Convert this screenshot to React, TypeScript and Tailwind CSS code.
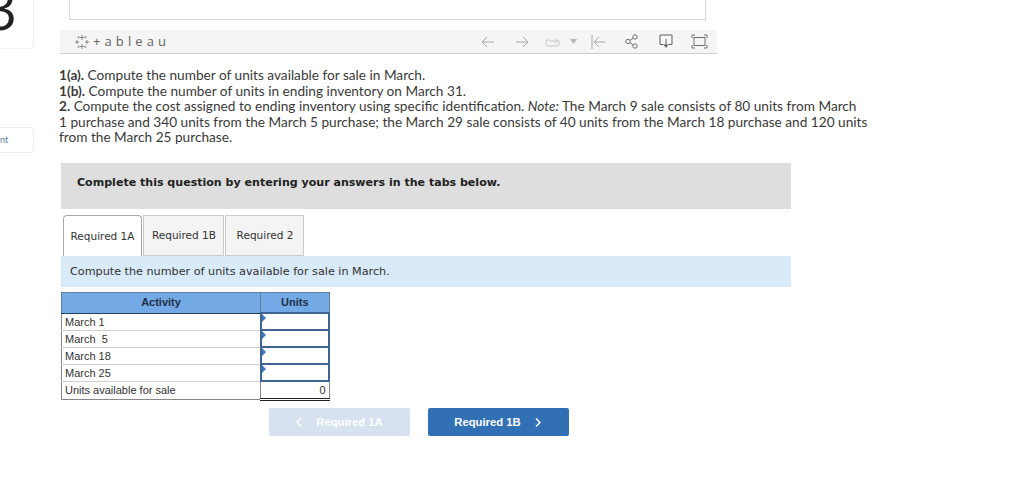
import React from "react";

const rows = ["March 1", "March  5", "March 18", "March 25"];

function TableauMark() {
  return (
    <svg width="16" height="16" viewBox="0 0 16 16" fill="none" stroke="#8a8a8a" strokeWidth="1">
      <path d="M8 1v5M5.500 3.500h5M8 10v5M5.500 12.500h5M3 6v4M1 8h4M13 6v4M11 8h4" />
      <path d="M4.500 2v2.500M3.300 3.200h2.400M11.500 2v2.500M10.300 3.200h2.400M4.500 11.500V14M3.300 12.800h2.400M11.500 11.500V14M10.300 12.800h2.400" strokeWidth="0.8" strokeDasharray="1 0.6" />
    </svg>
  );
}

function ToolbarIcons() {
  const c = "#a9a9a9";
  return (
    <div className="flex items-center">
      <svg width="14" height="12" viewBox="0 0 14 12" fill="none" stroke={c}><path d="M13 6H1M6 1 1 6l5 5" /></svg>
      <svg width="14" height="12" viewBox="0 0 14 12" fill="none" stroke={c} className="ml-[20px]"><path d="M1 6h12M8 1l5 5-5 5" /></svg>
      <svg width="16" height="12" viewBox="0 0 16 12" fill="none" stroke="#c4c4c4" className="ml-[16px]"><path d="M5 4H3a2 2 0 0 0-2 2v2a2 2 0 0 0 2 2h9a2 2 0 0 0 2-2V6a2 2 0 0 0-1-1.700M5 5h7.500M10 2.500 12.500 5 10 7.500" /></svg>
      <svg width="7" height="5" viewBox="0 0 7 5" fill="#b5b5b5" className="ml-[9px]"><path d="M0 0h7L3.500 5z" /></svg>
      <svg width="14" height="14" viewBox="0 0 14 14" fill="none" stroke={c} className="ml-[14px]"><path d="M1 0v14M14 7H3M8 2 3 7l5 5" /></svg>
      <svg width="14" height="15" viewBox="0 0 14 15" fill="none" stroke="#707070" className="ml-[20px]"><circle cx="3" cy="7.500" r="2.200" /><circle cx="10" cy="3" r="2.200" /><circle cx="10" cy="12" r="2.200" /><path d="M5 6.300 8.200 4.200M5 8.700l3.200 2.100" /></svg>
      <svg width="14" height="15" viewBox="0 0 14 15" fill="none" stroke="#606060" className="ml-[20px]"><path d="M4.500 10.500H1V1h12v9.500H9.500" /><path d="M7 5v8" /><path d="M4.500 10.500h5L7 14z" fill="#606060" stroke="none" /></svg>
      <svg width="17" height="15" viewBox="0 0 17 15" fill="none" stroke="#707070" className="ml-[18px]"><rect x="3" y="3.500" width="11" height="8" /><path d="M1 4V1h3M13 1h3v3M1 11v3h3M13 14h3v-3" /></svg>
    </div>
  );
}

export default function App() {
  return (
    <div className="flex h-[477px] w-[1024px] overflow-hidden bg-white font-['Lato','Open_Sans',sans-serif] text-[#333]">
      <aside className="flex w-[34px] shrink-0 flex-col">
        <div className="h-[49px] overflow-hidden rounded-br border-b border-r border-[#f0f0f0]">
          <div className="mt-[-26px] ml-[-15px] font-['Open_Sans',sans-serif] text-[56px] leading-[68px] text-[#222]">3</div>
        </div>
        <div className="mt-[78px] flex h-[26px] items-center rounded-r border border-l-0 border-[#eeeeee] text-[9px] text-[#5b7f9c]">nt</div>
      </aside>

      <main className="ml-[25px] w-[760px] shrink-0">
        <div className="ml-[10px] h-[20px] w-[637px] border-x border-b border-[#d9d9d9]" />

        <div className="mt-[10px] ml-[1px] flex h-[24px] w-[657px] items-center justify-between border-b border-[#cfcfcf] bg-[#f5f5f5] pl-[14px] pr-[9px]">
          <div className="flex items-center gap-[3px]">
            <TableauMark />
            <span className="font-['Open_Sans',sans-serif] text-[13px] tracking-[4.100px] text-[#666]">+ableau</span>
          </div>
          <ToolbarIcons />
        </div>

        <div className="mt-[14px] w-[815px] text-[13.650px] leading-[15.500px] text-[#3a3a3a]">
          <p><b>1(a).</b> Compute the number of units available for sale in March.</p>
          <p><b>1(b).</b> Compute the number of units in ending inventory on March 31.</p>
          <p><b>2.</b> Compute the cost assigned to ending inventory using specific identification. <i>Note:</i> The March 9 sale consists of 80 units from March<br />1 purchase and 340 units from the March 5 purchase; the March 29 sale consists of 40 units from the March 18 purchase and 120 units<br />from the March 25 purchase.</p>
        </div>

        <div className="mt-[17px] ml-[2px] flex h-[46px] w-[730px] items-start bg-[#dedede] pl-[16px] pt-[13px] font-['DejaVu_Sans',sans-serif] text-[11.050px] leading-[14px] font-bold text-[#222]">
          Complete this question by entering your answers in the tabs below.
        </div>

        <div className="mt-[6px] ml-[4px] flex h-[41px] items-end gap-[1px] font-['DejaVu_Sans',sans-serif] text-[10.500px] text-[#333]">
          <div className="z-10 flex h-[41px] w-[79px] items-center justify-center rounded-t-sm border border-b-0 border-[#a8a8a8] bg-white pt-[2px]">Required 1A</div>
          <div className="flex h-[41px] w-[81px] items-center justify-center border border-[#cccccc] bg-[#f4f4f4] pt-[2px] pl-[1px]">Required 1B</div>
          <div className="flex h-[41px] w-[79px] items-center justify-center border border-[#cccccc] bg-[#f4f4f4] pt-[2px] pl-[1px]">Required 2</div>
        </div>

        <div className="ml-[2px] flex h-[31px] w-[730px] items-center bg-[#d9eaf8] pl-[9px] pt-[2px] font-['DejaVu_Sans',sans-serif] text-[11.200px] text-[#333]">
          Compute the number of units available for sale in March.
        </div>

        <table className="mt-[5px] ml-[2px] w-[269px] table-fixed border-collapse font-['Liberation_Sans',sans-serif] text-[11px] leading-[14px] text-[#333]">
          <thead>
            <tr className="h-[21px] bg-[#73a9e4] font-bold text-[#1e2f46]">
              <th className="w-[199px] border border-[#5f7f9f] border-b-[#24405f] p-0 pb-[2px] font-bold">Activity</th>
              <th className="border border-[#5f7f9f] border-b-[#24405f] p-0 font-bold">Units</th>
            </tr>
          </thead>
          <tbody>
            {rows.map((r) => (
              <tr key={r} className="h-[17px]">
                <td className="whitespace-pre border-x border-b border-[#888] border-b-[#cfcfcf] py-0 pl-[3px] last:border-b-[#888]">{r}</td>
                <td className="relative border-2 border-[#3f6594] p-0">
                  <span className="absolute left-0 top-0 h-0 w-0 border-y-[4px] border-l-[4px] border-y-transparent border-l-[#3f78c0]" />
                </td>
              </tr>
            ))}
            <tr className="h-[18px]">
              <td className="border border-[#888] py-0 pl-[3px]">Units available for sale</td>
              <td className="border-x border-t border-b-[3px] border-x-[#888] border-t-[#222] border-b-[#222] border-double py-0 pr-[3px] text-right">0</td>
            </tr>
          </tbody>
        </table>

        <div className="mt-[7px] ml-[210px] flex gap-[18px] font-['Liberation_Sans',sans-serif] text-[11.300px] font-bold text-white">
          <div className="flex h-[28px] w-[141px] items-center justify-center gap-[14px] rounded-[2px] bg-[#d6e2f0] pt-[1px]">
            <svg width="6" height="9" viewBox="0 0 6 9" fill="none" stroke="#fff" strokeWidth="1.500"><path d="M5 .5 1 4.500l4 4" /></svg>
            Required 1A
          </div>
          <div className="flex h-[28px] w-[141px] items-center justify-center gap-[14px] rounded-[2px] bg-[#3270b5] pt-[1px] pr-[2px]">
            Required 1B
            <svg width="6" height="9" viewBox="0 0 6 9" fill="none" stroke="#fff" strokeWidth="1.500"><path d="m1 .5 4 4-4 4" /></svg>
          </div>
        </div>
      </main>
    </div>
  );
}
